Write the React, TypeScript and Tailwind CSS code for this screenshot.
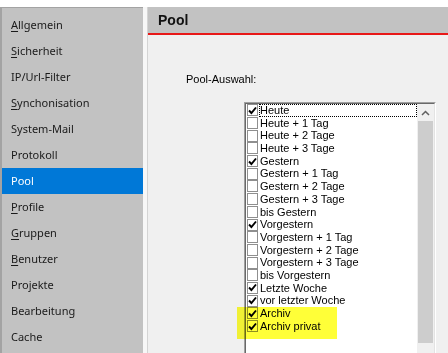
const navItems = [
  { label: "Allgemein", key: "A" },
  { label: "Sicherheit", key: "S" },
  { label: "IP/Url-Filter" },
  { label: "Synchonisation", key: "S" },
  { label: "System-Mail" },
  { label: "Protokoll" },
  { label: "Pool", active: true },
  { label: "Profile", key: "P" },
  { label: "Gruppen", key: "G" },
  { label: "Benutzer", key: "B" },
  { label: "Projekte" },
  { label: "Bearbeitung" },
  { label: "Cache" },
];

const poolItems = [
  { label: "Heute", checked: true },
  { label: "Heute + 1 Tag" },
  { label: "Heute + 2 Tage" },
  { label: "Heute + 3 Tage" },
  { label: "Gestern", checked: true },
  { label: "Gestern + 1 Tag" },
  { label: "Gestern + 2 Tage" },
  { label: "Gestern + 3 Tage" },
  { label: "bis Gestern" },
  { label: "Vorgestern", checked: true },
  { label: "Vorgestern + 1 Tag" },
  { label: "Vorgestern + 2 Tage" },
  { label: "Vorgestern + 3 Tage" },
  { label: "bis Vorgestern" },
  { label: "Letzte Woche", checked: true },
  { label: "vor letzter Woche", checked: true },
  { label: "Archiv", checked: true },
  { label: "Archiv privat", checked: true },
];

const Check = ({ checked }: { checked?: boolean }) => (
  <div className="w-[11px] h-[12px] shrink-0 ml-[1px] border border-[#8f8f8f] bg-white flex items-center justify-center">
    {checked && (
      <svg width="9" height="9" viewBox="0 0 9 9" fill="none">
        <path d="M1 4.5 L3.4 7 L8 1.5" stroke="#000" strokeWidth={1.9} />
      </svg>
    )}
  </div>
);

export default function App() {
  return (
    <div className="relative w-[448px] h-[353px] overflow-hidden bg-white pt-[7px] flex">
      {/* Sidebar */}
      <nav className="w-[143px] shrink-0 h-[360px] bg-[#c2c2c2] border-l-2 border-t border-[#a3a3a3] pt-[4px] font-['Noto_Sans',sans-serif] text-[11px]">
        {navItems.map((item) => (
          <div
            key={item.label}
            className={`h-[26px] flex items-center pl-[9px] ${
              item.active ? "bg-[#0078d7] text-white" : "text-[#1a1a1a]"
            }`}
          >
            {item.key ? (
              <span>
                <u className="underline-offset-2">{item.label[0]}</u>
                {item.label.slice(1)}
              </span>
            ) : (
              <span>{item.label}</span>
            )}
          </div>
        ))}
      </nav>

      {/* Divider */}
      <div className="w-[5px] shrink-0 bg-[#f7f7f7] border-r border-[#d4d4d4]"></div>

      {/* Main panel */}
      <div className="flex-1 bg-[#f0f0f0] flex flex-col font-['Liberation_Sans',Arial,sans-serif]">
        <div className="h-[28px] shrink-0 bg-[#c2c2c2] border-b-2 border-[#e81818] pl-[10px] flex items-center">
          <span className="text-[14px] font-bold text-[#111]">Pool</span>
        </div>

        <div className="pt-[38px] pl-[38px] flex flex-col">
          <div className="text-[11px] leading-[13px] text-black">Pool-Auswahl:</div>

          {/* Checked list box */}
          <div className="mt-[16px] ml-[58px] w-[192px] border-t border-l border-[#a0a0a0] border-r border-b border-r-white border-b-white">
            <div className="h-[262px] flex bg-white border-t border-l border-[#696969] border-r border-b border-r-[#e3e3e3] border-b-[#e3e3e3]">
              <div className="flex-1 flex flex-col">
                {poolItems.map((item, i) => (
                  <div key={item.label} className="h-[12.7px] flex items-center">
                    <Check checked={item.checked} />
                    <span
                      className={`flex-1 ml-[1px] h-full leading-[12.7px] text-[11px] text-black pl-[1px] ${
                        i === 0 ? "outline-1 outline-dotted outline-black -outline-offset-1" : ""
                      }`}
                    >
                      {item.label}
                    </span>
                  </div>
                ))}
              </div>

              {/* Scrollbar */}
              <div className="w-[17px] shrink-0 bg-[#f0f0f0] flex flex-col px-[1px]">
                <div className="h-[17px] flex items-center justify-center">
                  <svg width="9" height="6" viewBox="0 0 9 6" fill="none">
                    <path d="M1 5 L4.5 1.5 L8 5" stroke="#606060" strokeWidth={1.5} />
                  </svg>
                </div>
                <div className="h-[222px] bg-[#cdcdcd]"></div>
              </div>
            </div>
          </div>
        </div>
      </div>

      {/* Highlighter marking */}
      <div className="absolute left-[237px] top-[307px] w-[100px] h-[32px] bg-[#ffff38] mix-blend-multiply"></div>
    </div>
  );
}
